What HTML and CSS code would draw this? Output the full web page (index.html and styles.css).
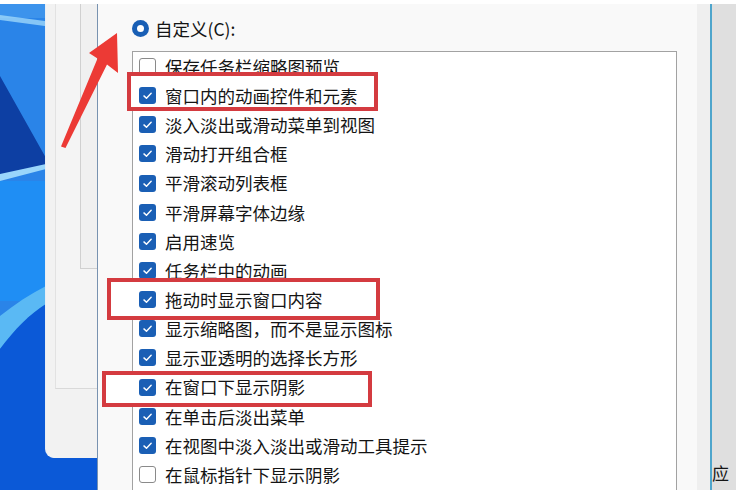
FILE: index.html
```html
<!DOCTYPE html>
<html lang="zh-CN">
<head>
<meta charset="utf-8">
<title>性能选项</title>
<link rel="stylesheet" href="styles.css">
</head>
<body>
<div class="screen">
  <div class="left">
    <svg class="wall" viewBox="0 0 97 486" preserveAspectRatio="none" aria-hidden="true">
      <rect x="0" y="0" width="97" height="486" fill="#2a84e8"/>
      <rect x="0" y="0" width="97" height="14" fill="#3c93ec"/>
      <polygon points="0,11 97,24 97,29 0,16" fill="#a6dcfb" opacity="0.75"/>
      <polygon points="0,72 46,154 97,150 97,160 46,162 0,172" fill="#0d3fa3"/>
      <polygon points="0,170 46,160 97,156 97,162 46,165 0,177" fill="#9ad6fb"/>
      <rect x="0" y="177" width="97" height="120" fill="#1f8ef4"/>
      <path d="M0 312 C15 300 30 290 46 282 L97 270 L97 292 L46 300 C30 310 15 325 0 345 Z" fill="#5ab9f4"/>
      <path d="M0 345 C15 325 30 310 46 300 L97 292 L97 486 L0 486 Z" fill="#0b59d7"/>
    </svg>
    <div class="backwin">
      <div class="bw-panel"><div class="bw-inner"></div></div>
    </div>
  </div>
  <div class="dlg-edge"></div>
  <div class="dialog">
    <div class="radio-row"><span class="radio"></span><span class="label">自定义(C):</span></div>
    <div class="listbox">
      <div class="row"><span class="cb off"></span><span class="txt">保存任务栏缩略图预览</span></div>
      <div class="row hl hl1"><span class="cb"><svg viewBox="0 0 16 16"><path d="M4.2 8.4 L6.9 11 L11.9 5.6"/></svg></span><span class="txt">窗口内的动画控件和元素</span></div>
      <div class="row"><span class="cb"><svg viewBox="0 0 16 16"><path d="M4.2 8.4 L6.9 11 L11.9 5.6"/></svg></span><span class="txt">淡入淡出或滑动菜单到视图</span></div>
      <div class="row"><span class="cb"><svg viewBox="0 0 16 16"><path d="M4.2 8.4 L6.9 11 L11.9 5.6"/></svg></span><span class="txt">滑动打开组合框</span></div>
      <div class="row"><span class="cb"><svg viewBox="0 0 16 16"><path d="M4.2 8.4 L6.9 11 L11.9 5.6"/></svg></span><span class="txt">平滑滚动列表框</span></div>
      <div class="row"><span class="cb"><svg viewBox="0 0 16 16"><path d="M4.2 8.4 L6.9 11 L11.9 5.6"/></svg></span><span class="txt">平滑屏幕字体边缘</span></div>
      <div class="row"><span class="cb"><svg viewBox="0 0 16 16"><path d="M4.2 8.4 L6.9 11 L11.9 5.6"/></svg></span><span class="txt">启用速览</span></div>
      <div class="row"><span class="cb"><svg viewBox="0 0 16 16"><path d="M4.2 8.4 L6.9 11 L11.9 5.6"/></svg></span><span class="txt">任务栏中的动画</span></div>
      <div class="row hl hl2"><span class="cb"><svg viewBox="0 0 16 16"><path d="M4.2 8.4 L6.9 11 L11.9 5.6"/></svg></span><span class="txt">拖动时显示窗口内容</span></div>
      <div class="row"><span class="cb"><svg viewBox="0 0 16 16"><path d="M4.2 8.4 L6.9 11 L11.9 5.6"/></svg></span><span class="txt">显示缩略图，而不是显示图标</span></div>
      <div class="row"><span class="cb"><svg viewBox="0 0 16 16"><path d="M4.2 8.4 L6.9 11 L11.9 5.6"/></svg></span><span class="txt">显示亚透明的选择长方形</span></div>
      <div class="row hl hl3"><span class="cb"><svg viewBox="0 0 16 16"><path d="M4.2 8.4 L6.9 11 L11.9 5.6"/></svg></span><span class="txt">在窗口下显示阴影</span></div>
      <div class="row"><span class="cb"><svg viewBox="0 0 16 16"><path d="M4.2 8.4 L6.9 11 L11.9 5.6"/></svg></span><span class="txt">在单击后淡出菜单</span></div>
      <div class="row"><span class="cb"><svg viewBox="0 0 16 16"><path d="M4.2 8.4 L6.9 11 L11.9 5.6"/></svg></span><span class="txt">在视图中淡入淡出或滑动工具提示</span></div>
      <div class="row"><span class="cb off"></span><span class="txt">在鼠标指针下显示阴影</span></div>
    </div>
  </div>
  <div class="rs1"></div>
  <div class="rs-line"></div>
  <div class="rs2"><span class="apply">应</span></div>
</div>
<svg class="arrow" viewBox="55 28 70 125" aria-hidden="true">
  <polygon points="117,33 118,73 107,64.5 65.5,148 61,146.5 97.5,58.5 89,53" fill="#ec3a35"/>
</svg>
</body>
</html>
```

FILE: styles.css
```css
html, body {
  margin: 0;
  padding: 0;
  background: #ffffff;
}
body {
  width: 736px;
  height: 500px;
  overflow: hidden;
  position: relative;
  font-family: "Noto Sans CJK SC", "Noto Sans", sans-serif;
  color: #141414;
}
.screen {
  margin-top: 4px;
  height: 486px;
  display: flex;
}
.left {
  width: 97px;
  flex: none;
  display: grid;
}
.wall {
  grid-area: 1 / 1;
  width: 97px;
  height: 486px;
  display: block;
}
.backwin {
  grid-area: 1 / 1;
  align-self: start;
  margin-left: 46px;
  height: 454px;
  background: #f2f2f2;
  border-bottom-left-radius: 9px;
  box-shadow: -1px 0 0 #e8eef5;
}
.bw-panel {
  margin-left: 9px;
  height: 384px;
  border-left: 1px solid #e2e2e2;
  border-bottom: 1px solid #d9d9d9;
  background: #f4f4f4;
}
.bw-inner {
  margin-left: 24px;
  height: 264px;
  border-left: 1px solid #d0d0d0;
  border-bottom: 1px solid #d0d0d0;
  background: #f0f0f0;
}
.dlg-edge {
  width: 1px;
  flex: none;
  background: #7892b0;
}
.dialog {
  width: 599px;
  flex: none;
  box-sizing: border-box;
  background: #f9f9f9;
  padding: 16px 20px 0 34px;
  display: flex;
  flex-direction: column;
}
.radio-row {
  height: 17px;
  display: flex;
  align-items: center;
  gap: 6px;
}
.radio {
  width: 17px;
  height: 17px;
  border-radius: 50%;
  background: #195fb5;
  display: grid;
  place-items: center;
  flex: none;
}
.radio::after {
  content: "";
  width: 7px;
  height: 7px;
  border-radius: 50%;
  background: #ffffff;
}
.label {
  font-size: 17.5px;
  line-height: 1;
}
.listbox {
  margin-top: 14px;
  flex: 1;
  background: #ffffff;
  border: 1px solid #a2a2a2;
  border-bottom: none;
}
.row {
  position: relative;
  height: 29.15px;
  display: flex;
  align-items: center;
  padding-left: 6px;
  gap: 9px;
}
.cb {
  width: 17px;
  height: 17px;
  flex: none;
  box-sizing: border-box;
  border-radius: 3px;
  background: #1a5fb5;
  display: grid;
  place-items: center;
}
.cb svg {
  width: 15px;
  height: 15px;
  fill: none;
  stroke: #ffffff;
  stroke-width: 1.5;
  stroke-linecap: round;
  stroke-linejoin: round;
}
.cb.off {
  background: #ffffff;
  border: 1px solid #8a8a8a;
}
.txt {
  font-size: 17.5px;
  line-height: 1;
  white-space: nowrap;
}
.hl {
  z-index: 1;
}
.hl::before {
  content: "";
  position: absolute;
  box-sizing: border-box;
  border: 4px solid #d43b40;
  background: #ffffff;
  z-index: -1;
}
.hl1::before {
  left: -6px;
  top: -9px;
  width: 251px;
  height: 39px;
}
.hl2::before {
  left: -26px;
  top: -7px;
  width: 273px;
  height: 42px;
}
.hl3::before {
  left: -31px;
  top: -2px;
  width: 270px;
  height: 36px;
}
.rs1 {
  width: 13px;
  flex: none;
  background: #efefef;
}
.rs-line {
  width: 2px;
  flex: none;
  background: #4ea5cc;
}
.rs2 {
  width: 24px;
  flex: none;
  background: #dfdfdf;
  display: flex;
  flex-direction: column;
  justify-content: flex-end;
  padding-bottom: 9px;
  box-sizing: border-box;
}
.apply {
  font-size: 17px;
  line-height: 1;
  white-space: nowrap;
  color: #151515;
}
.arrow {
  position: absolute;
  left: 55px;
  top: 28px;
  width: 70px;
  height: 125px;
}
```
